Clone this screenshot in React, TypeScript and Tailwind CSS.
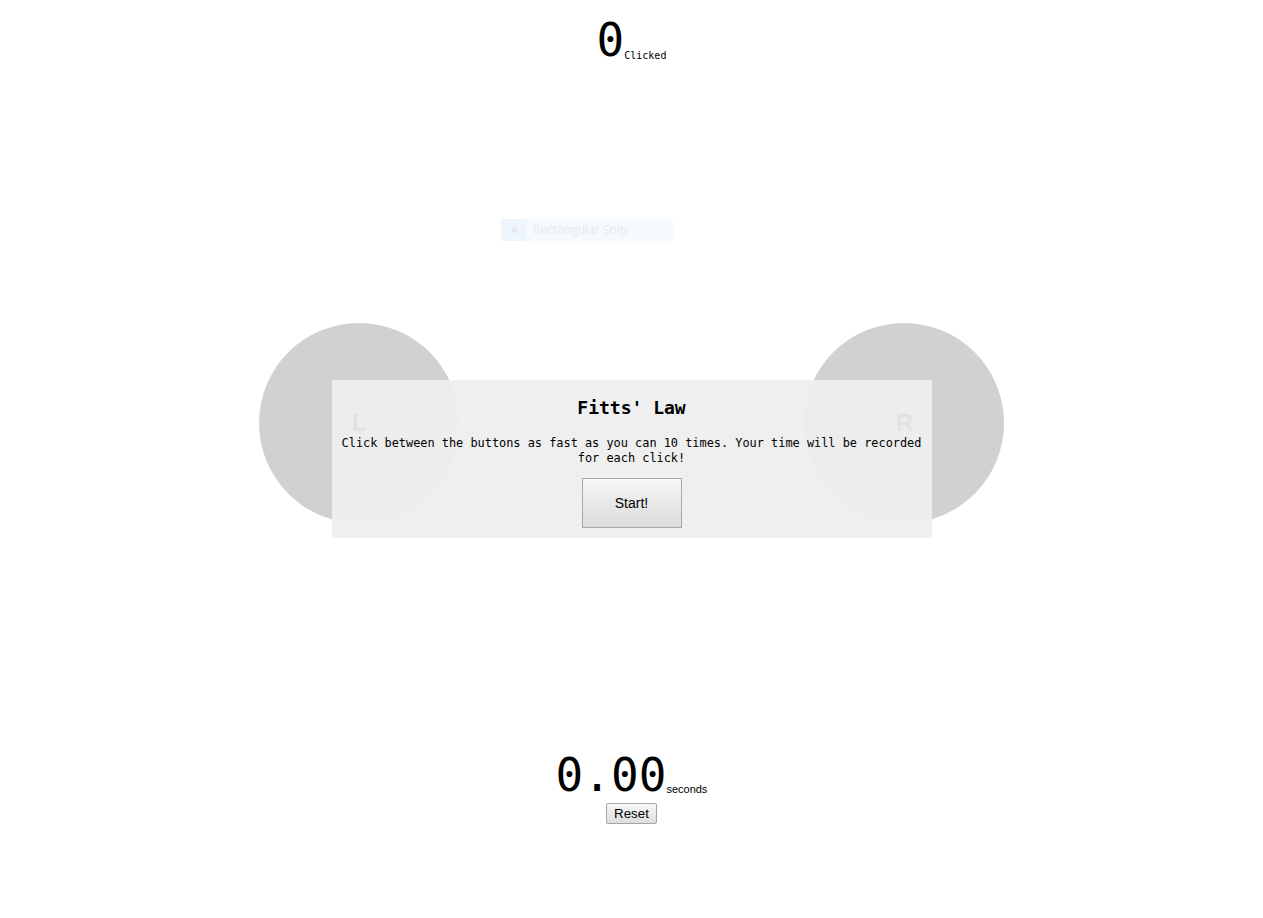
import { useState } from 'react'

const mono = { fontFamily: '"DejaVu Sans Mono", "Liberation Mono", monospace' }
const sans = { fontFamily: '"Liberation Sans", Arial, sans-serif' }

export default function App() {
  const [clicks, setClicks] = useState(0)
  const [seconds, setSeconds] = useState(0)

  return (
    <div className="relative flex h-[918px] w-full flex-col items-center bg-white text-black">
      {/* click counter */}
      <div className="mt-[17px] flex items-baseline leading-none" style={mono}>
        <span className="text-[46px] leading-none">{clicks}</span>
        <span className="translate-y-[3px] text-[10px] leading-none">Clicked</span>
      </div>

      {/* ghost of a snipping tool, left in the screenshot */}
      <div className="absolute left-[501px] top-[219px] flex h-[22px] w-[172px] items-center bg-[#f5faff]">
        <div className="flex h-full w-[26px] items-center justify-center bg-[#eef5fd]">
          <span className="h-[5px] w-[5px] rounded-full bg-[#e3e6ea]" />
        </div>
        <span className="ml-[6px] text-[12px] text-[#e6e9ed]" style={{ fontFamily: '"Open Sans", sans-serif' }}>
          Rectangular Snip
        </span>
      </div>

      {/* targets */}
      <div className="relative mt-[260px] flex h-[200px] w-[745px] justify-between">
        <button
          onClick={() => setClicks(clicks + 1)}
          className="h-[200px] w-[200px] rounded-full bg-[#d1d1d1]"
        />
        <button
          onClick={() => setClicks(clicks + 1)}
          className="h-[200px] w-[200px] rounded-full bg-[#d1d1d1]"
        />

        <div className="absolute left-1/2 top-[57px] flex h-[158px] w-[600px] -translate-x-1/2 flex-col items-center bg-[#eeeeee]/95 px-2 pt-[17px]">
          <h1 className="text-[18px] font-bold leading-[22px]" style={mono}>
            Fitts' Law
          </h1>
          <p className="mt-[17px] text-center text-[11.9px] leading-[15px]" style={mono}>
            Click between the buttons as fast as you can 10 times. Your time will be recorded for each click!
          </p>
          <button
            onClick={() => setSeconds(0)}
            className="mt-[12px] h-[50px] w-[100px] border border-[#a9a9a9] bg-gradient-to-b from-[#f6f6f6] to-[#dcdcdc] text-[14px]"
            style={sans}
          >
            Start!
          </button>
        </div>

        <span className="pointer-events-none absolute left-[93px] top-[88px] text-[24px] font-bold leading-none text-[#e2e2e2]" style={sans}>
          L
        </span>
        <span className="pointer-events-none absolute left-[637px] top-[88px] text-[24px] font-bold leading-none text-[#e2e2e2]" style={sans}>
          R
        </span>
      </div>

      {/* timer */}
      <div className="mt-[229px] flex items-baseline leading-none">
        <span className="text-[46px] leading-none" style={mono}>
          {seconds.toFixed(2)}
        </span>
        <span className="translate-y-[2px] text-[11px] leading-none" style={sans}>
          seconds
        </span>
      </div>
      <button
        onClick={() => {
          setClicks(0)
          setSeconds(0)
        }}
        className="mt-[5px] h-[21px] w-[51px] rounded-[2px] border border-[#a6a6a6] bg-gradient-to-b from-[#f7f7f7] to-[#dddddd] text-[13.33px] leading-none"
        style={sans}
      >
        Reset
      </button>
    </div>
  )
}
